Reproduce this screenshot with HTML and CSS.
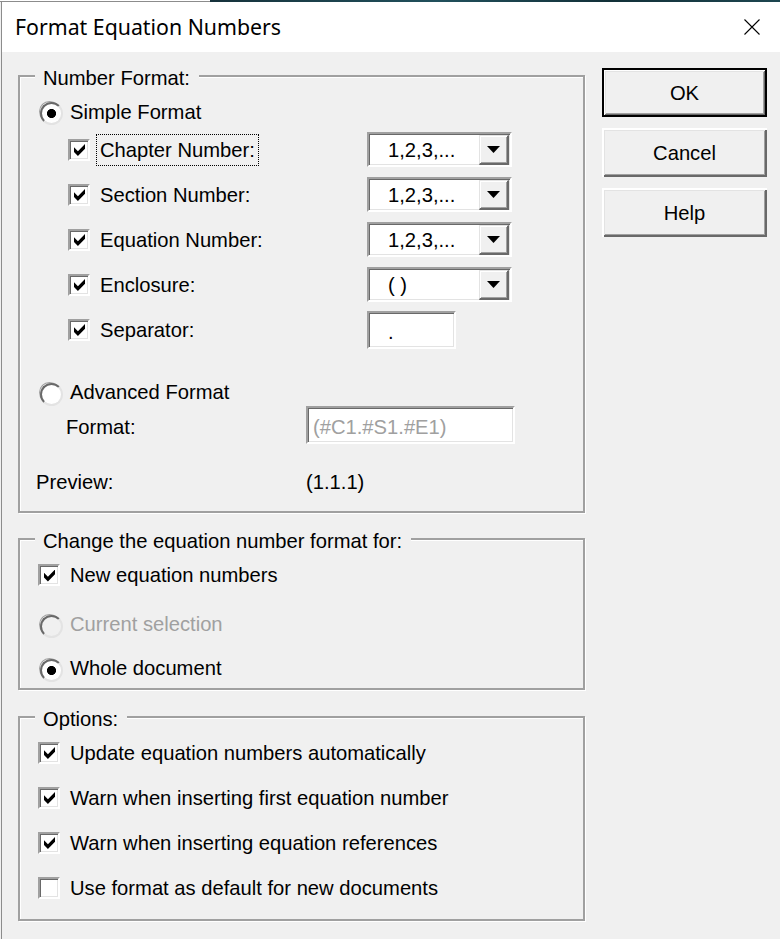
FILE: index.html
```html
<!DOCTYPE html>
<html lang="en">
<head>
<meta charset="utf-8">
<title>Format Equation Numbers</title>
<link rel="stylesheet" href="styles.css">
</head>
<body>
<div class="edge"><div class="edge-left"></div><div class="edge-right"></div></div>
<div class="window">
  <header class="titlebar">
    <h1 class="title">Format Equation Numbers</h1>
    <svg class="close" width="16" height="16" viewBox="0 0 16 16"><path d="M0.5 0.5L15.5 15.5M15.5 0.5L0.5 15.5" stroke="#000" stroke-width="1.1" fill="none"/></svg>
  </header>
  <main class="dialog">
    <div class="groups">
      <fieldset class="group g1">
        <legend>Number Format:</legend>
        <div class="opt simple"><span class="radio checked"></span><span>Simple Format</span></div>
        <div class="num"><span class="check on"></span><span class="lbl focus">Chapter Number:</span><div class="combo"><span class="combo-text">1,2,3,...</span><span class="combo-btn"><span class="tri"></span></span></div></div>
        <div class="num"><span class="check on"></span><span class="lbl">Section Number:</span><div class="combo"><span class="combo-text">1,2,3,...</span><span class="combo-btn"><span class="tri"></span></span></div></div>
        <div class="num"><span class="check on"></span><span class="lbl">Equation Number:</span><div class="combo"><span class="combo-text">1,2,3,...</span><span class="combo-btn"><span class="tri"></span></span></div></div>
        <div class="num"><span class="check on"></span><span class="lbl">Enclosure:</span><div class="combo"><span class="combo-text">( )</span><span class="combo-btn"><span class="tri"></span></span></div></div>
        <div class="num"><span class="check on"></span><span class="lbl">Separator:</span><div class="edit sep">.</div></div>
        <div class="opt adv"><span class="radio"></span><span>Advanced Format</span></div>
        <div class="format-row"><span class="fmt-lbl">Format:</span><div class="edit wide disabled-text">(#C1.#S1.#E1)</div></div>
        <div class="preview"><span>Preview:</span><span>(1.1.1)</span></div>
      </fieldset>
      <fieldset class="group g2">
        <legend>Change the equation number format for:</legend>
        <div class="opt r1"><span class="check on"></span><span>New equation numbers</span></div>
        <div class="opt r2 disabled"><span class="radio"></span><span>Current selection</span></div>
        <div class="opt r3"><span class="radio checked"></span><span>Whole document</span></div>
      </fieldset>
      <fieldset class="group g3">
        <legend>Options:</legend>
        <div class="opts">
          <div class="opt tall"><span class="check on"></span><span>Update equation numbers automatically</span></div>
          <div class="opt tall"><span class="check on"></span><span>Warn when inserting first equation number</span></div>
          <div class="opt tall"><span class="check on"></span><span>Warn when inserting equation references</span></div>
          <div class="opt tall"><span class="check"></span><span>Use format as default for new documents</span></div>
        </div>
      </fieldset>
    </div>
    <div class="buttons">
      <button class="btn default">OK</button>
      <button class="btn">Cancel</button>
      <button class="btn">Help</button>
    </div>
  </main>
</div>
</body>
</html>
```
FILE: styles.css
```css
* { box-sizing: border-box; }
html, body { margin: 0; padding: 0; }
body {
  width: 780px;
  height: 939px;
  overflow: hidden;
  background: #f0f0f0;
  font-family: "Liberation Sans", Arial, sans-serif;
  font-size: 20.2px;
  line-height: 24px;
  color: #000;
}
.edge { display: flex; height: 2px; }
.edge-left { width: 210px; background: #fff; border-bottom: 1px solid #8c8c8c; }
.edge-right { flex: 1; background: linear-gradient(90deg, #16323b, #21505c 40%, #123038 70%, #1d4650); }
.window { margin-left: 1px; border-left: 1px solid #8c8c8c; height: 937px; }
.titlebar {
  height: 50px;
  background: #fff;
  display: flex;
  align-items: center;
  justify-content: space-between;
  padding: 0 20px 0 13px;
}
.title {
  margin: 0;
  font-family: "Noto Sans", "Open Sans", sans-serif;
  font-weight: 400;
  font-size: 21.3px;
  line-height: 26px;
}
.close { display: block; }
.dialog { display: flex; align-items: flex-start; padding: 10px 0 0 16px; }
.groups { width: 567px; display: flex; flex-direction: column; }
.group {
  margin: 0;
  padding: 0;
  min-width: 0;
  border: 2px solid #a0a0a0;
  box-shadow: 1px 1px 0 #fff, inset 1px 1px 0 #fff;
}
.group legend {
  margin-left: 15px;
  padding: 4px 9px 0 8px;
  line-height: 24px;
  background: #f0f0f0;
}
.g2 { margin-top: 12px; }
.g3 { margin-top: 13px; }

.opt { display: flex; align-items: center; gap: 10px; padding-left: 18px; height: 34px; }
.simple { margin-top: 6px; height: 31px; }
.adv { margin-top: 26px; height: 28px; }
.r1 { margin-top: 5px; }
.r2 { margin-top: 15px; }
.r3 { margin-top: 10px; margin-bottom: 3px; }
.opts { display: flex; flex-direction: column; gap: 10px; padding: 4px 0 14px; }
.opt.tall { height: 35px; }
.disabled { color: #a0a0a0; }

.radio {
  width: 21px;
  height: 21px;
  margin-left: 1px;
  flex: none;
  border-radius: 50%;
  border: 1px solid;
  border-color: #a0a0a0 #fff #fff #a0a0a0;
}
.radio::before {
  content: "";
  display: block;
  width: 100%;
  height: 100%;
  border-radius: 50%;
  border: 2px solid;
  border-color: #696969 #e3e3e3 #e3e3e3 #696969;
  background: #fff;
}
.radio.checked::before { background: radial-gradient(circle, #000 0 4.2px, #fff 4.9px); }
.disabled .radio::before { background: #f0f0f0; }

.check {
  width: 22px;
  height: 22px;
  flex: none;
  display: flex;
  align-items: center;
  justify-content: center;
  border: 2px solid;
  border-color: #a0a0a0 #fff #fff #a0a0a0;
  box-shadow: inset 1px 1px 0 #696969, inset -1px -1px 0 #e3e3e3;
  background: #fff;
}
.check.on::after {
  content: "";
  width: 11px;
  height: 12px;
  margin: 1px 0 0 1px;
  background: #000;
  clip-path: polygon(0 26.7%, 35.7% 60%, 100% 0, 100% 40%, 35.7% 100%, 0 66.7%);
}

.num {
  display: grid;
  grid-template-columns: 22px 1fr 145px;
  column-gap: 6px;
  align-items: center;
  height: 45px;
  padding: 0 71px 0 48px;
}
.lbl { justify-self: start; border: 1px solid transparent; padding: 3px 3px; }
.lbl.focus { border: 1px dotted #000; }

.combo {
  height: 35px;
  display: flex;
  border: 2px solid;
  border-color: #a0a0a0 #fff #fff #a0a0a0;
  box-shadow: inset 1px 1px 0 #696969, inset -1px -1px 0 #e3e3e3;
  background: #fff;
}
.combo-text { flex: 1; display: flex; align-items: center; padding-left: 19px; }
.combo-btn {
  width: 30px;
  margin: 1px 1px 0 0;
  display: flex;
  align-items: center;
  justify-content: center;
  border-style: solid;
  border-width: 1px 2px 2px 1px;
  border-color: #e3e3e3 #696969 #696969 #e3e3e3;
  box-shadow: inset 1px 1px 0 #fff, inset -1px -1px 0 #a0a0a0;
  background: #f0f0f0;
}
.tri { width: 13px; height: 7px; background: #000; clip-path: polygon(0 0, 100% 0, 50% 100%); }

.edit {
  height: 38px;
  border: 2px solid;
  border-color: #a0a0a0 #fff #fff #a0a0a0;
  box-shadow: inset 1px 1px 0 #696969, inset -1px -1px 0 #e3e3e3;
  background: #fff;
  padding: 4px 0 0 19px;
  display: flex;
  align-items: center;
}
.edit.sep { width: 89px; }
.edit.wide { width: 209px; padding-left: 5px; }
.disabled-text { color: #a0a0a0; }

.format-row {
  display: grid;
  grid-template-columns: 240px 209px;
  align-items: center;
  height: 38px;
  padding-left: 46px;
}
.fmt-lbl { padding-top: 3px; }
.preview {
  display: grid;
  grid-template-columns: 270px 1fr;
  padding-left: 16px;
  margin: 26px 0 17px;
}

.buttons { margin: 6px 0 0 17px; display: flex; flex-direction: column; gap: 11px; width: 165px; }
.btn {
  width: 165px;
  height: 49px;
  padding: 1px 0 0;
  border: 0;
  font-family: inherit;
  font-size: 20.2px;
  color: #000;
  background: #f0f0f0;
  box-shadow: inset 2px 2px 0 #fff, inset -2px -2px 0 #696969, inset 3px 3px 0 #e3e3e3, inset -3px -3px 0 #a0a0a0;
}
.btn.default {
  border: 2px solid #000;
  box-shadow: inset 1px 1px 0 #fff, inset -1px -1px 0 #696969, inset 2px 2px 0 #e3e3e3, inset -2px -2px 0 #a0a0a0;
}
```
